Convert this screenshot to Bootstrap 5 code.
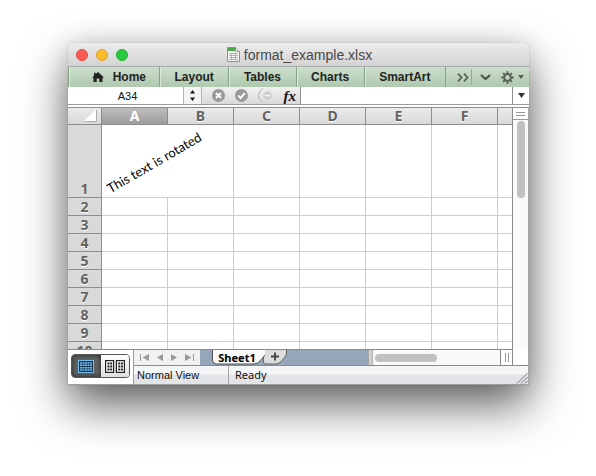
<!DOCTYPE html>
<html lang="en">
<head>
<meta charset="utf-8">
<meta name="viewport" content="width=device-width, initial-scale=1">
<title>format_example.xlsx</title>
<link href="https://cdn.jsdelivr.net/npm/bootstrap@5.3.0/dist/css/bootstrap.min.css" rel="stylesheet">
<style>
  body { font-family: "Liberation Sans", Arial, sans-serif; font-size: 12px; line-height: 16px; color: #111; background: #fff; }
  button, input { font: inherit; color: inherit; border: 0; background: none; padding: 0; border-radius: 0; }
  svg { display: block; flex: none; }
  .desktop { padding: 43px 67px 91px 68px; }
  .app-window { border-radius: 5px 5px 0 0; background: #fff; box-shadow: 0 0 1px rgba(0,0,0,.45), 0 20px 46px rgba(0,0,0,.62), 0 0 24px rgba(0,0,0,.1); }
  .app-window > :first-child { border-radius: 5px 5px 0 0; }
  .title-bar { height: 24px; background: linear-gradient(#ececec, #d3d3d3); border-bottom: 1px solid #acacac; font-size: 14px; color: #484848; padding: 0 6px 0 8px; }
  .lights { gap: 8px; flex: 1 1 0; }
  .light { width: 12px; height: 12px; border-radius: 50%; border: 1px solid; }
  .light-red { background: #fc5b57; border-color: #e2463f; }
  .light-yellow { background: #fdbc2e; border-color: #e0a028; }
  .light-green { background: #28c840; border-color: #1fad2d; }
  .ribbon { height: 20px; background: linear-gradient(#cddfcb, #afc8ae); color: #222; font-weight: bold; font-size: 12px; }
  .ribbon-tab { border-left: 1px solid #86a586; box-shadow: inset 1px 0 0 #dbe9da; padding: 0 14px; }
  .ribbon-home { flex: 0 0 91px; padding: 0 13px 0 23px; }
  .ribbon-tools { flex: 0 0 84px; border-left: 1px solid #86a586; padding: 0 5px 0 11px; }
  .ribbon-rule { width: 1px; height: 16px; background: #94ad93; margin: 0 8px 0 2px; }
  .formula-bar { height: 18px; background: linear-gradient(#f1f1f1, #d9d9d9); border-bottom: 1px solid #9b9b9b; }
  .name-box { width: 115px; background: #fff; text-align: center; padding-left: 4px; font-size: 11px; }
  .stepper { width: 19px; border-left: 1px solid #b5b5b5; border-right: 1px solid #b5b5b5; background: #f4f4f4; }
  .formula-tools { width: 98px; padding: 0 4px 0 10px; }
  .fx { font-family: "Liberation Serif", serif; font-size: 15px; font-weight: bold; font-style: italic; }
  .formula-input { background: #fff; border-left: 1px solid #8c8c8c; border-right: 1px solid #8c8c8c; min-width: 0; }
  .drop { width: 16px; background: #fff; }
  .work-area { margin-top: 2px; border-top: 1px solid #8d8d8d; }
  .sheet-view { flex: 1 1 0; min-width: 0; border-right: 1px solid #8a8a8a; }
  .sheet { table-layout: fixed; width: 100%; border-collapse: separate; border-spacing: 0; }
  .sheet th { font-family: "Noto Sans", "Open Sans", sans-serif; font-size: 14px; font-weight: bold; line-height: 16px; color: #636363; text-align: center; padding: 0; border-right: 1px solid #8d8d8d; border-bottom: 1px solid #8d8d8d; text-shadow: 0 1px 0 #fff; }
  .sheet thead th { height: 17px; background: linear-gradient(#ebebeb, #d9d9d9); }
  .sheet thead .picked { background: linear-gradient(#bebebe, #9c9c9c); color: #fff; text-shadow: none; }
  .sheet tbody th { height: 18px; background: #d9d9d9; vertical-align: bottom; line-height: 17px; }
  .sheet td { padding: 0; border-right: 1px solid #cdcdcd; border-bottom: 1px solid #cdcdcd; }
  .sheet tr > :last-child { border-right: 0; }
  .sheet .tall th { height: 73px; }
  .rotated { font-family: Lato, Carlito, sans-serif; font-size: 13px; line-height: 16px; color: #000; white-space: nowrap; vertical-align: bottom; }
  .rotated span { display: block; width: 0; margin: 0 0 1px 10px; transform: rotate(-30deg); transform-origin: 0 100%; }
  .v-scroll { width: 16px; background: #fafafa; border-right: 1px solid #a9a9a9; }
  .v-split { height: 12px; background: #fff; border-bottom: 1px solid #9a9a9a; padding: 4px 3px; }
  .v-split::before { content: ""; display: block; height: 4px; border-top: 1px solid #999; border-bottom: 1px solid #999; }
  .v-thumb { width: 8px; height: 77px; margin: 1px 0 0 4px; border-radius: 4px; background: #c1c1c1; }
  .bottom { border-right: 1px solid #a9a9a9; border-bottom: 1px solid #a0a0a0; }
  .views { width: 66px; border-right: 1px solid #999; border-top: 1px solid #8a8a8a; padding: 4px 3px 5px; }
  .view-group { border: 1px solid #555; border-radius: 4px; overflow: hidden; width: 59px; height: 24px; }
  .view-group button { flex: 1 1 0; display: flex; align-items: center; justify-content: center; background: linear-gradient(#fff, #dedede); }
  .view-group .on { background: #606262; box-shadow: inset 0 0 5px #222; }
  .tab-row { height: 17px; }
  .tab-strip { border-top: 1px solid #8a8a8a; border-bottom: 1px solid #8a8a8a; background: #97a5b9; min-width: 0; }
  .sheet-nav { width: 66px; background: #f1f1f1; padding: 0 6px; color: #aaa; }
  .sheet-tabs { margin-left: 12px; }
  .sheet-tab { width: 54px; height: 15px; font-family: "Noto Sans", "Open Sans", sans-serif; font-size: 11px; font-weight: bold; line-height: 13px; color: #000; }
  .add-tab { width: 24px; height: 15px; margin-left: -3px; }
  .h-split { width: 5px; background: linear-gradient(90deg, #8d8d8d, #d5d5d5 30%, #bbb); }
  .h-scroll { width: 127px; background: #fafafa; border-left: 1px solid #eee; }
  .h-thumb { width: 62px; height: 8px; margin: 4px 0 0 1px; border-radius: 4px; background: #c1c1c1; }
  .h-end { width: 13px; background: #fff; border-left: 1px solid #8a8a8a; border-right: 1px solid #8a8a8a; padding: 3px 4px; }
  .h-end::before { content: ""; display: block; width: 4px; height: 9px; border-left: 1px solid #999; border-right: 1px solid #999; }
  .corner { width: 15px; background: #fff; border-bottom: 1px solid #8a8a8a; }
  .status { height: 18px; background: linear-gradient(#f5f6f7 0 45%, #e2e4e7 50%); color: #111; font-family: "Noto Sans", "Open Sans", sans-serif; font-size: 11px; line-height: 18px; }
  .status-view { width: 95px; padding-left: 3px; border-right: 1px solid #a5a5a5; font-family: "Liberation Sans", Arial, sans-serif; font-size: 11px; }
  .status-text { padding-left: 6px; }
</style>
</head>
<body>
<main class="desktop d-flex flex-column min-vh-100">
  <div class="app-window d-flex flex-column flex-grow-1">
    <header class="title-bar d-flex align-items-center">
      <div class="lights d-flex">
        <button class="light light-red" type="button" aria-label="Close"></button>
        <button class="light light-yellow" type="button" aria-label="Minimize"></button>
        <button class="light light-green" type="button" aria-label="Zoom"></button>
      </div>
      <div class="d-flex align-items-center gap-1">
        <svg width="13" height="15" viewBox="0 0 13 15"><path d="M.5.5h8l4 4v10H.5z" fill="#fbfbfb" stroke="#8a8f8a"/><path d="M1 1h7.500l1 3H1z" fill="#4da647"/><path d="M8.500.5v4h4" fill="#e8e8e8" stroke="#999"/><path d="M2 6.500h9M2 8.500h9M2 10.500h9M2 12.500h9M4.500 6v7.500M8.500 6v7.500" stroke="#a3b8a0" fill="none"/></svg>
        <span>format_example.xlsx</span>
      </div>
      <div class="lights"></div>
    </header>

    <nav class="ribbon d-flex">
      <button class="ribbon-tab ribbon-home d-flex align-items-center justify-content-between" type="button">
        <svg width="12" height="10" viewBox="0 0 12 10"><path d="M6 0 12 5.500h-1.500V10H7.300V6.500H4.700V10H1.500V5.500H0L2 3.700V.8h1.700v1.300z" fill="#222"/></svg>Home</button>
      <button class="ribbon-tab flex-fill" type="button">Layout</button>
      <button class="ribbon-tab flex-fill" type="button">Tables</button>
      <button class="ribbon-tab flex-fill" type="button">Charts</button>
      <button class="ribbon-tab flex-fill" type="button">SmartArt</button>
      <div class="ribbon-tools d-flex align-items-center">
        <button type="button" aria-label="More tabs"><svg width="12" height="9" viewBox="0 0 12 9"><path d="M1 .7 4.500 4.500 1 8.300M7 .7l3.500 3.800L7 8.300" fill="none" stroke="#576357" stroke-width="1.800"/></svg></button>
        <span class="ribbon-rule"></span>
        <button type="button" aria-label="Collapse ribbon"><svg width="11" height="7" viewBox="0 0 11 7"><path d="M1 1l4.500 4L10 1" fill="none" stroke="#485348" stroke-width="2.200"/></svg></button>
        <button type="button" aria-label="Ribbon options" class="d-flex align-items-center gap-1 ms-auto"><svg width="13" height="13" viewBox="-6.500 -6.500 13 13"><g stroke="#566056" fill="none"><circle r="3.400" stroke-width="2"/><path stroke-width="1.900" d="M0-6.200V-4M0 6.200V4M-6.200 0H-4M6.200 0H4M-4.400-4.400l1.600 1.600M4.400 4.400 2.800 2.800M4.400-4.400 2.800-2.800M-4.400 4.400l1.600-1.600"/></g></svg><svg width="6" height="4" viewBox="0 0 6 4"><path d="M0 0h6L3 4z" fill="#566056"/></svg></button>
      </div>
    </nav>

    <div class="formula-bar d-flex">
      <input class="name-box" aria-label="Name box" value="A34">
      <button class="stepper d-flex align-items-center justify-content-center" type="button" aria-label="Choose name"><svg width="5" height="11" viewBox="0 0 5 11"><path d="M0 3.500 2.500 0 5 3.500zM0 7.500h5L2.500 11z" fill="#111"/></svg></button>
      <div class="formula-tools d-flex align-items-center justify-content-between">
        <button type="button" aria-label="Cancel"><svg width="13" height="13" viewBox="0 0 13 13"><circle cx="6.500" cy="6.500" r="6.500" fill="#999"/><path d="m4 4 5 5m0-5-5 5" stroke="#fff" stroke-width="2"/></svg></button>
        <button type="button" aria-label="Enter"><svg width="13" height="13" viewBox="0 0 13 13"><circle cx="6.500" cy="6.500" r="6.500" fill="#999"/><path d="m3.200 6.500 2.400 2.600 4.200-5" fill="none" stroke="#fff" stroke-width="2"/></svg></button>
        <button type="button" aria-label="Formula builder"><svg width="15" height="15" viewBox="0 0 15 15"><path d="M5 .5q-4.500 2.500-4.500 7T5 14.500" fill="none" stroke="#b0b0b0"/><circle cx="9.500" cy="7.500" r="4.300" fill="#ccc"/><path d="M6.500 7.500h6" stroke="#f4f4f4" stroke-width="1.500"/></svg></button>
        <button class="fx" type="button">fx</button>
      </div>
      <input class="formula-input flex-fill" aria-label="Formula">
      <button class="drop d-flex align-items-center justify-content-center" type="button" aria-label="Expand formula bar"><svg width="7" height="5" viewBox="0 0 7 5"><path d="M0 0h7L3.500 5z" fill="#333"/></svg></button>
    </div>

    <div class="work-area d-flex flex-grow-1">
      <div class="sheet-view overflow-hidden position-relative">
        <div class="position-absolute top-0 start-0 w-100">
        <table class="sheet">
          <colgroup><col style="width:34px"><col style="width:66px"><col style="width:66px"><col style="width:66px"><col style="width:66px"><col style="width:66px"><col style="width:66px"><col></colgroup>
          <thead><tr>
            <th aria-label="Select all"><svg class="ms-auto me-1" width="13" height="12" viewBox="0 0 13 12"><path d="M12.500 0v11.500H1" fill="none" stroke="#aaa"/><path d="M12 0v11H0z" fill="#fff"/></svg></th>
            <th class="picked">A</th><th>B</th><th>C</th><th>D</th><th>E</th><th>F</th><th></th>
          </tr></thead>
          <tbody>
            <tr class="tall"><th>1</th><td class="rotated" colspan="2"><span>This text is rotated</span></td><td></td><td></td><td></td><td></td><td></td></tr>
            <tr><th>2</th><td></td><td></td><td></td><td></td><td></td><td></td><td></td></tr>
            <tr><th>3</th><td></td><td></td><td></td><td></td><td></td><td></td><td></td></tr>
            <tr><th>4</th><td></td><td></td><td></td><td></td><td></td><td></td><td></td></tr>
            <tr><th>5</th><td></td><td></td><td></td><td></td><td></td><td></td><td></td></tr>
            <tr><th>6</th><td></td><td></td><td></td><td></td><td></td><td></td><td></td></tr>
            <tr><th>7</th><td></td><td></td><td></td><td></td><td></td><td></td><td></td></tr>
            <tr><th>8</th><td></td><td></td><td></td><td></td><td></td><td></td><td></td></tr>
            <tr><th>9</th><td></td><td></td><td></td><td></td><td></td><td></td><td></td></tr>
            <tr><th>10</th><td></td><td></td><td></td><td></td><td></td><td></td><td></td></tr>
          </tbody>
        </table>
        </div>
      </div>
      <div class="v-scroll"><div class="v-split"></div><div class="v-thumb"></div></div>
    </div>

    <footer class="bottom d-flex">
      <div class="views">
        <div class="view-group d-flex">
          <button class="on" type="button" aria-label="Normal view"><svg width="16" height="13" viewBox="0 0 16 13"><rect x=".5" y=".5" width="15" height="12" fill="#173a56" stroke="#78b9e8"/><path d="M2 3h12M2 5.300h12M2 7.700h12M2 10h12" stroke="#6fb8ee" stroke-width="1.500" stroke-dasharray="2 .5"/></svg></button>
          <button type="button" aria-label="Page layout view"><svg width="20" height="13" viewBox="0 0 20 13"><g fill="#fff" stroke="#222" stroke-width="1.200"><rect x=".6" y=".6" width="8" height="11.800"/><rect x="11.400" y=".6" width="8" height="11.800"/></g><path d="M2.500 3.500h5M2.500 6.500h5M2.500 9.500h5M13.200 3.500h5M13.200 6.500h5M13.200 9.500h5" stroke="#222" stroke-width="2" stroke-dasharray="2 .7"/></svg></button>
        </div>
      </div>
      <div class="flex-fill">
        <div class="tab-row d-flex">
          <div class="tab-strip d-flex flex-fill">
            <div class="sheet-nav d-flex align-items-center justify-content-between">
              <button type="button" aria-label="First sheet"><svg width="9" height="7" viewBox="0 0 9 7"><path d="M.5 0v7" stroke="#999"/><path d="M9 0v7L2.500 3.500z" fill="#999"/></svg></button>
              <button type="button" aria-label="Previous sheet"><svg width="6" height="7" viewBox="0 0 6 7"><path d="M6 0v7L0 3.500z" fill="#999"/></svg></button>
              <button type="button" aria-label="Next sheet"><svg width="6" height="7" viewBox="0 0 6 7"><path d="M0 0v7l6-3.500z" fill="#999"/></svg></button>
              <button type="button" aria-label="Last sheet"><svg width="9" height="7" viewBox="0 0 9 7"><path d="M8.500 0v7" stroke="#999"/><path d="M0 0v7l6.500-3.500z" fill="#999"/></svg></button>
            </div>
            <div class="sheet-tabs d-flex">
              <button class="sheet-tab position-relative z-1 pe-1" type="button"><svg class="position-absolute top-0 start-0 z-n1" width="54" height="15" viewBox="0 0 54 15"><path d="M.5 0v10q0 4 4 4H42q3.500 0 6-3l5-6V0z" fill="#fafafa"/><path d="M.5 0v10q0 4 4 4H42q3.500 0 6-3l5-6" fill="none" stroke="#555"/></svg>Sheet1</button>
              <button class="add-tab" type="button" aria-label="Add sheet"><svg width="24" height="15" viewBox="0 0 24 15"><path d="M.5 7v5q0 2 2 2H12q4 0 6.500-3L22 7q1.500-2 1.500-4V0H2z" fill="#ddd"/><path d="M.5 7v5q0 2 2 2H12q4 0 6.500-3L22 7q1.500-2 1.500-4V0" fill="none" stroke="#666"/><path d="M12 2.500v8M8 6.500h8" stroke="#444" stroke-width="1.800"/></svg></button>
            </div>
            <div class="h-split ms-auto"></div>
            <div class="h-scroll"><div class="h-thumb"></div></div>
            <div class="h-end"></div>
          </div>
          <div class="corner"></div>
        </div>
        <div class="status d-flex">
          <div class="status-view">Normal View</div>
          <div class="status-text flex-fill">Ready</div>
          <svg class="align-self-end" width="12" height="12" viewBox="0 0 12 12"><path d="M1 11.500 11.500 1M5 11.500l6.500-6.500M9 11.500l2.500-2.500" stroke="#777" fill="none"/></svg>
        </div>
      </div>
    </footer>
  </div>
</main>
<script src="https://cdn.jsdelivr.net/npm/bootstrap@5.3.0/dist/js/bootstrap.bundle.min.js"></script>
</body>
</html>
